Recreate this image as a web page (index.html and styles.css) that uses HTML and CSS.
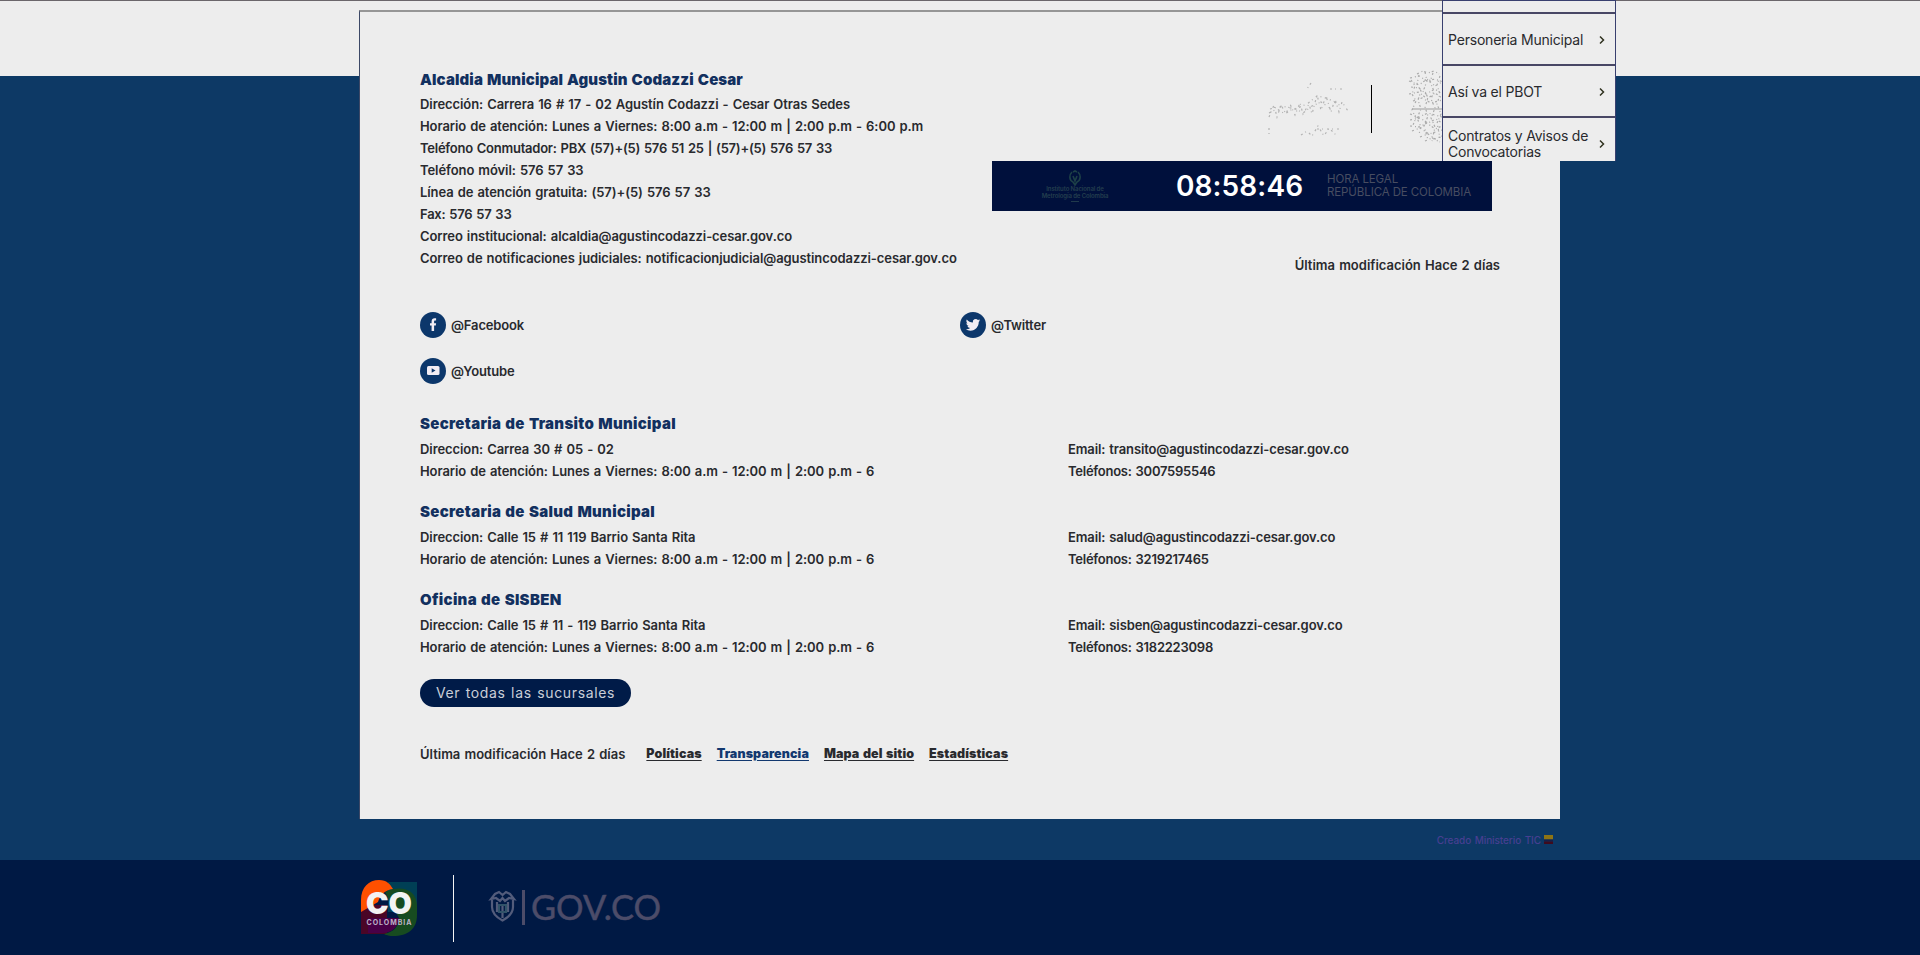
FILE: index.html
```html
<!DOCTYPE html>
<html lang="es">
<head>
<meta charset="utf-8">
<title>Alcaldia Municipal Agustin Codazzi Cesar</title>
<link rel="stylesheet" href="styles.css">
</head>
<body>
<div class="page">
  <div class="band"></div>
  <main class="card">
    <section class="top">
      <div class="contact">
        <h2>Alcaldia Municipal Agustin Codazzi Cesar</h2>
        <p>Dirección: Carrera 16 # 17 - 02 Agustín Codazzi - Cesar Otras Sedes</p>
        <p>Horario de atención: Lunes a Viernes: 8:00 a.m - 12:00 m | 2:00 p.m - 6:00 p.m</p>
        <p class="tight">Teléfono Conmutador: PBX (57)+(5) 576 51 25 | (57)+(5) 576 57 33</p>
        <p>Teléfono móvil: 576 57 33</p>
        <p>Línea de atención gratuita: (57)+(5) 576 57 33</p>
        <p class="tight">Fax: 576 57 33</p>
        <p>Correo institucional: alcaldia@agustincodazzi-cesar.gov.co</p>
        <p>Correo de notificaciones judiciales: notificacionjudicial@agustincodazzi-cesar.gov.co</p>
      </div>
      <div class="side">
        <svg class="crests" viewBox="0 0 175 75" width="175" height="75" fill="none">
          <g stroke="#b2b2b2" stroke-width="1.2" stroke-dasharray="2 3 1 4">
            <path d="M2 48l5-12 3 12 4-12 5 9 4-10 5 11 5-12 3 11 6-10 3 10 5-19 4 15 5-14 5 16 4-13 4 13 3-10 6 9M3 40l12-3 13 3 12-5 10-8 10 2 14 8M2 44l8-4 8 5 9-6 9 5 9-7 9-4 9 6M44 14l-4 6M63 20h12M34 66l6-4 5 5 6-10 6 10 5-8 8 8M2 59v8M50 60h22"/>
          </g>
          <g stroke="#aaa" stroke-width="1.2" stroke-dasharray="2 3 1 2">
            <path d="M150 5l6-3 5 2 6-2 5 3M143 9l9-2 8 5 8-2 8 3M142 12l10 4 8-6 8 7 7-4M144 18l8 1 7 6 9-5 7 5M142 25l10-2 8 7 8-6 7 5M146 32l9-3 9 5 11-3M143 45l9 3 9-4 14 4M143 51l10-2 8 5 8-4 6 4M143 57l9 1 8-4 8 6 7-3M145 62l8-3 9 6 13-4M153 68l8-3 7 5 7-3M158 72l7-3 8 4M144 11l4 6-3 8 4 7-4 9 4 8-3 7M152 6l-2 9 4 7-3 9 3 9-4 9 4 9-2 7M158 3l2 9-3 8 4 9-3 9 3 9-4 10 4 14M166 4l-3 9 4 9-3 8 4 9-4 10 4 9-3 14M173 7l-3 9 3 9-3 10 4 10-4 9 3 15"/>
            <path d="M145 40h30" stroke-dasharray="none"/>
          </g>
          <path d="M104.500 16v48" stroke="#000"/>
        </svg>
        <div class="clock">
          <div class="inm">
            <svg viewBox="0 0 14 16" width="14" height="16" fill="none" stroke="#1d4047" stroke-width="1.600"><path d="M4 2C1 5 1 10 5 12l2 3 2-3c4-2 4-7 1-10M5 6l2 5 2-5M5 2l2-1 2 1"/></svg>
            <span>Instituto Nacional de</span>
            <span>Metrología de Colombia</span>
            <i></i>
          </div>
          <strong>08:58:46</strong>
          <div class="legal">HORA LEGAL<br>REPÚBLICA DE COLOMBIA</div>
        </div>
        <p class="updated">Última modificación Hace 2 días</p>
      </div>
    </section>

    <section class="social">
      <a><svg viewBox="0 0 26 26" width="26" height="26"><circle cx="13" cy="13" r="13" fill="#0c376b"/><path fill="#f2edf4" d="M11.600 19v-5.500H10v-2.300h1.600V9.600c0-2.300 1.200-3.300 3-3.300h1.500v2.200h-1c-.7 0-1 .4-1 1v1.700h2l-.3 2.300h-1.700V19z"/></svg>@Facebook</a>
      <a><svg viewBox="0 0 26 26" width="26" height="26"><circle cx="13" cy="13" r="13" fill="#0c376b"/><path fill="#f2edf4" transform="translate(5.800 5.600) scale(.6)" d="M23.950 4.570a10 10 0 01-2.820.77 4.960 4.960 0 002.160-2.720c-.95.550-2 .95-3.120 1.180a4.920 4.920 0 00-8.380 4.480C7.690 8.100 4.070 6.130 1.640 3.160a4.820 4.820 0 00-.67 2.470c0 1.710.87 3.210 2.190 4.100a4.900 4.900 0 01-2.230-.62v.06a4.920 4.920 0 003.950 4.830 5 5 0 01-2.210.08 4.940 4.940 0 004.600 3.420A9.870 9.870 0 010 19.540a13.990 13.990 0 007.550 2.210c9.050 0 14-7.500 14-13.990 0-.21 0-.42-.02-.63a9.940 9.940 0 002.460-2.550z"/></svg>@Twitter</a>
      <a><svg viewBox="0 0 26 26" width="26" height="26"><circle cx="13" cy="13" r="13" fill="#0c376b"/><rect x="7" y="8" width="12.500" height="9" rx="1.500" fill="#f2edf4"/><path fill="#0c376b" d="M11.700 10.300v4.400l3.800-2.200z"/></svg>@Youtube</a>
    </section>

    <section class="office">
      <h2>Secretaria de Transito Municipal</h2>
      <p>Direccion: Carrea 30 # 05 - 02</p><p class="mail">Email: transito@agustincodazzi-cesar.gov.co</p>
      <p>Horario de atención: Lunes a Viernes: 8:00 a.m - 12:00 m | 2:00 p.m - 6</p><p class="tight">Teléfonos: 3007595546</p>
    </section>
    <section class="office">
      <h2>Secretaria de Salud Municipal</h2>
      <p>Direccion: Calle 15 # 11 119 Barrio Santa Rita</p><p class="mail">Email: salud@agustincodazzi-cesar.gov.co</p>
      <p>Horario de atención: Lunes a Viernes: 8:00 a.m - 12:00 m | 2:00 p.m - 6</p><p class="tight">Teléfonos: 3219217465</p>
    </section>
    <section class="office">
      <h2>Oficina de SISBEN</h2>
      <p>Direccion: Calle 15 # 11 - 119 Barrio Santa Rita</p><p class="mail">Email: sisben@agustincodazzi-cesar.gov.co</p>
      <p>Horario de atención: Lunes a Viernes: 8:00 a.m - 12:00 m | 2:00 p.m - 6</p><p class="tight">Teléfonos: 3182223098</p>
    </section>

    <a class="button">Ver todas las sucursales</a>

    <div class="links">
      <span>Última modificación Hace 2 días</span>
      <a>Políticas</a><a class="active">Transparencia</a><a>Mapa del sitio</a><a>Estadísticas</a>
    </div>
  </main>

  <p class="credit">Creado Ministerio TIC
    <svg viewBox="0 0 9 9" width="9" height="9"><path fill="#8d7414" d="M0 0h9v4.500H0z"/><path fill="#14204a" d="M0 4.500h9v2H0z"/><path fill="#3f0b1e" d="M0 6.500h9V9H0z"/></svg>
  </p>

  <footer class="footer">
    <svg class="co" viewBox="0 0 58 58" width="58" height="58">
      <path fill="#003f55" d="M28 2h29v30H28z"/>
      <path fill="#4a0626" d="M1 25h26v29H1z"/>
      <path fill="#490047" d="M8 38h32c-3 10-9 15-17 15H8z"/>
      <path fill="#174b20" d="M25 12c17-8 32-2 32 14v9c0 14-9 21-24 21-6 0-9-2-9-2 10-2 15-8 15-16z"/>
      <path fill="#ff5000" d="M1 32V20C1 7 9 0 19 0c8 0 11 4 14 9-8 1-13 6-15 13z"/>
      <text x="6" y="34" textLength="46" lengthAdjust="spacingAndGlyphs" class="co-big">CO</text>
      <text x="6.500" y="45" textLength="45" lengthAdjust="spacing" class="co-small">COLOMBIA</text>
    </svg>
    <span class="rule"></span>
    <svg class="gov" viewBox="0 0 180 50" width="180" height="50">
      <g fill="none" stroke="#535c7b" stroke-width="2.200">
        <path d="M3 10v7c0 6 4 10 10.500 13.500C20 27 24 23 24 17v-7"/>
        <path d="M13.500 5L10 2 6 4 2 9l5-1 4 3 2.500-3 2.500 3 4-3 5 1-4-5-4-2zM8 12v10M19 12v10M13.500 14v14"/>
        <path stroke="#315369" d="M10 15h7v7h-7z"/>
      </g>
      <path fill="#4c4c69" d="M33 0h3v35h-3z"/>
      <text x="42" y="29.500" textLength="130" lengthAdjust="spacingAndGlyphs" class="gov-text">GOV.CO</text>
    </svg>
  </footer>

  <nav class="menu">
    <a></a>
    <a>Personeria Municipal<svg viewBox="0 0 6 10" width="6" height="10"><path d="M1 1.500L4.500 5 1 8.500"/></svg></a>
    <a>Así va el PBOT<svg viewBox="0 0 6 10" width="6" height="10"><path d="M1 1.500L4.500 5 1 8.500"/></svg></a>
    <a><span>Contratos y Avisos de Convocatorias</span><svg viewBox="0 0 6 10" width="6" height="10"><path d="M1 1.500L4.500 5 1 8.500"/></svg></a>
  </nav>
</div>
</body>
</html>
```
FILE: styles.css
```css
* { box-sizing: border-box; }
body {
  margin: 0;
  background: #0d3965;
  color: #292a2e;
  font: 600 13px/22px Inter, "Open Sans", sans-serif;
  letter-spacing: -.08px;
  word-spacing: .9px;
}
h2, p { margin: 0; }
.page { position: relative; height: 955px; overflow: hidden; display: flex; flex-direction: column; }
.band { height: 76px; flex: none; background: #ededed; border-top: 1px solid #6b666b; }

.card {
  width: 1201px;
  height: 809px;
  margin: -66px 0 0 359px;
  padding: 57px 60px 0;
  background: #ededed;
  border-top: 2px solid #969696;
  border-left: 1px solid #3c4866;
  flex: none;
  white-space: nowrap;
}
h2 { color: #12305f; font-weight: 900; font-size: 15px; line-height: 22px; letter-spacing: .3px; padding-bottom: 3px; }
.contact h2 { padding-bottom: 2px; letter-spacing: .12px; }
.tight { letter-spacing: -.25px; }
.mail { letter-spacing: -.12px; }
.top { display: flex; justify-content: space-between; height: 241px; }
.side { width: 508px; display: flex; flex-direction: column; }
.crests { margin-left: 275px; flex: none; }
.clock {
  width: 500px;
  height: 50px;
  margin-top: 17px;
  background: #00103c;
  display: flex;
  align-items: center;
  flex: none;
}
.inm { width: 66px; margin-left: 50px; display: flex; flex-direction: column; align-items: center; color: #243f4e; font-size: 6px; font-weight: 600; line-height: 6.500px; letter-spacing: -.1px; word-spacing: 0; }
.inm i { width: 8px; height: 1px; margin-top: 2px; background: #203a4c; }
.clock strong { margin-left: 68px; width: 128px; color: #fff; font-size: 28px; font-weight: 600; letter-spacing: .1px; }
.legal { margin-left: 23px; color: #474d61; font: 400 11.500px/13px Inter, sans-serif; letter-spacing: -.1px; word-spacing: 0; }
.updated { margin-top: 43px; text-align: right; letter-spacing: 0; }

.social { display: grid; grid-template-columns: 1fr 1fr; row-gap: 20px; margin-top: 2px; }
.social a { display: flex; align-items: center; gap: 5px; height: 26px; line-height: 20px; letter-spacing: -.15px; }

.office { display: grid; grid-template-columns: 648px 1fr; margin-top: 19px; }
.social + .office { margin-top: 29px; }
.office h2 { grid-column: 1 / -1; }

.button {
  display: flex;
  align-items: center;
  justify-content: center;
  width: 211px;
  height: 28px;
  margin-top: 21px;
  border-radius: 14px;
  background: #001b48;
  color: #c9ced8;
  font-size: 14px;
  font-weight: 400;
  letter-spacing: .65px;
}
.links { display: flex; gap: 15px; margin-top: 36px; }
.links span { margin-right: 6px; letter-spacing: 0; }
.links a { font-weight: 900; font-size: 12.500px; letter-spacing: .1px; text-decoration: underline; text-underline-offset: 2px; }
.links .active { color: #12386f; }

.credit { display: flex; justify-content: flex-end; align-items: center; gap: 3px; height: 41px; flex: none; padding: 0 367px 0 0; color: #473f91; font-size: 10px; font-weight: 500; }

.footer { flex: 1; background: #001944; display: flex; padding: 15px 0 0 360px; }
.co { margin-top: 5px; }
.co-big { font: 900 30px Inter, sans-serif; fill: #f3f3f3; letter-spacing: 0; }
.co-small { font: 700 7px Inter, sans-serif; fill: #bdb2c6; letter-spacing: 0; }
.rule { width: 1px; height: 67px; margin-left: 35px; background: #f4f4f4; }
.gov { margin: 15px 0 0 35px; overflow: visible; }
.gov-text { font: 400 35px Lato, sans-serif; fill: #4c4c69; stroke: #4c4c69; stroke-width: .5px; letter-spacing: 0; }

.menu {
  position: absolute;
  top: 0;
  left: 1442px;
  width: 174px;
  height: 161px;
  overflow: hidden;
  background: #ededed;
  border: solid #39406f;
  border-width: 1px 1px 0;
}
.menu a { display: flex; align-items: center; justify-content: space-between; height: 52px; padding: 2px 10px 0 5px; border-bottom: 2px solid #484765; font-size: 14px; font-weight: 400; line-height: 16px; letter-spacing: -.2px; word-spacing: 0; }
.menu a:first-child { height: 12.500px; }
.menu svg { fill: none; stroke: #30321f; stroke-width: 1.500; flex: none; }
```
